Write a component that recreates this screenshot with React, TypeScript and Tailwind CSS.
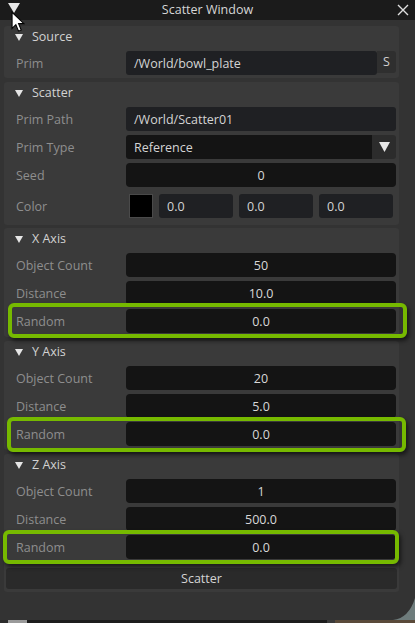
import React from "react";

const font = { fontFamily: '"Open Sans", "Liberation Sans", sans-serif' };

function Tri({ className = "" }: { className?: string }) {
  return (
    <svg width="8" height="7" viewBox="0 0 8 7" className={className}>
      <polygon points="0,0 8,0 4,7" fill="#e6e6e6" />
    </svg>
  );
}

function Header({ title }: { title: string }) {
  return (
    <div className="h-[22px] flex items-center pl-[11px] gap-[9px] pt-[1px]">
      <Tri />
      <span className="text-[#d2d2d2]">{title}</span>
    </div>
  );
}

function Row({ label, children, className = "" }: { label: string; children: React.ReactNode; className?: string }) {
  return (
    <div className={"flex items-center h-[24px] " + className}>
      <div className="w-[122px] pl-[12px] pt-[2px] text-[#8e8e8e] shrink-0">{label}</div>
      <div className="flex-1 h-full flex items-center">{children}</div>
    </div>
  );
}

function NumField({ value }: { value: string }) {
  return (
    <div className="w-[270px] h-full bg-[#141414] rounded-[4px] flex items-center justify-center pt-[2px] text-[#d8d8d8]">
      {value}
    </div>
  );
}

function Frame({ children, className = "" }: { children: React.ReactNode; className?: string }) {
  return <div className={"bg-[#3a3a3a] rounded-[3px] " + className}>{children}</div>;
}

function Axis({ name, count, dist, className = "" }: { name: string; count: string; dist: string; className?: string }) {
  return (
    <Frame className={"pb-[4px] " + className}>
      <Header title={name} />
      <div className="flex flex-col gap-[4px] mt-[3px]">
        <Row label="Object Count"><NumField value={count} /></Row>
        <Row label="Distance"><NumField value={dist} /></Row>
        <Row label="Random"><NumField value="0.0" /></Row>
      </div>
    </Frame>
  );
}

function GreenBox({ className }: { className: string }) {
  return (
    <div
      className={
        "absolute border-[4px] border-[#76b900] rounded-[6px] shadow-[2px_3px_4px_rgba(0,0,0,0.55)] pointer-events-none " +
        className
      }
    />
  );
}

export default function App() {
  return (
    <div className="relative w-[415px] h-[623px] bg-[#1c1c1c] overflow-hidden text-[12.5px]" style={font}>
      <div className="h-[620px] bg-[#333333] flex flex-col">
        {/* title bar */}
        <div className="h-[20px] bg-[#1b1b1b] relative flex items-center justify-center shrink-0">
          <span className="text-[#d6d6d6]">Scatter Window</span>
          <svg className="absolute left-[8px] top-[3px]" width="12" height="10" viewBox="0 0 12 10">
            <polygon points="0,0 12,0 6,10" fill="#e8e8e8" />
          </svg>
          <svg className="absolute right-[6px] top-[4px]" width="12" height="12" viewBox="0 0 12 12">
            <path d="M1 1 L11 11 M11 1 L1 11" stroke="#e0e0e0" strokeWidth="1.4" />
          </svg>
        </div>

        <div className="pl-[4px] pr-[16px] pt-[6px] flex flex-col">
          {/* Source */}
          <Frame className="pb-[3px]">
            <Header title="Source" />
            <Row label="Prim" className="mt-[3px]">
              <div className="w-[251px] h-full bg-[#1f2023] rounded-[3px] flex items-center pl-[8px] pt-[2px] text-[#d4d4d4]">
                /World/bowl_plate
              </div>
              <div className="w-[19px] h-[22px] self-start bg-[#2f2f2f] rounded-r-[3px] flex items-center justify-center pt-[1px] text-[#cfcfcf]">
                S
              </div>
            </Row>
          </Frame>

          {/* Scatter */}
          <Frame className="mt-[4px] pb-[7px]">
            <Header title="Scatter" />
            <div className="flex flex-col mt-[3px]">
              <Row label="Prim Path">
                <div className="w-[270px] h-full bg-[#1f2023] rounded-[3px] flex items-center pl-[8px] pt-[2px] text-[#d4d4d4]">
                  /World/Scatter01
                </div>
              </Row>
              <Row label="Prim Type" className="mt-[4px]">
                <div className="w-[270px] h-full flex rounded-[3px] overflow-hidden">
                  <div className="flex-1 bg-[#141414] flex items-center pl-[8px] pt-[2px] text-[#d4d4d4]">Reference</div>
                  <div className="w-[24px] bg-[#2c2c2c] flex items-center justify-center">
                    <svg width="11" height="10" viewBox="0 0 11 10">
                      <polygon points="0,0 11,0 5.5,10" fill="#e6e6e6" />
                    </svg>
                  </div>
                </div>
              </Row>
              <Row label="Seed" className="mt-[4px]">
                <NumField value="0" />
              </Row>
              <Row label="Color" className="mt-[7px]">
                <div className="flex items-center h-full gap-[6px] pl-[3px]">
                  <div className="w-[24px] h-[24px] bg-black border border-[#4a4a4a]" />
                  {["0.0", "0.0", "0.0"].map((v, i) => (
                    <div
                      key={i}
                      className="w-[74px] h-full bg-[#1f2023] rounded-[3px] flex items-center pl-[8px] pt-[2px] text-[#d4d4d4]"
                    >
                      {v}
                    </div>
                  ))}
                </div>
              </Row>
            </div>
          </Frame>

          <Axis name="X Axis" count="50" dist="10.0" className="mt-[3px]" />
          <Axis name="Y Axis" count="20" dist="5.0" className="mt-[4px]" />
          <Frame className="mt-[4px] pb-[3px]">
            <Header title="Z Axis" />
            <div className="flex flex-col gap-[4px] mt-[3px]">
              <Row label="Object Count"><NumField value="1" /></Row>
              <Row label="Distance"><NumField value="500.0" /></Row>
              <Row label="Random"><NumField value="0.0" /></Row>
            </div>
            <div className="mx-[2px] mt-[9px] h-[21px] bg-[#2a2a2a] rounded-[3px] flex items-center justify-center pt-[1px] text-[#d4d4d4]">
              Scatter
            </div>
          </Frame>
        </div>
      </div>

      {/* bottom strip of what lies beneath */}
      <div className="absolute left-0 top-[620px] w-full h-[3px] flex">
        <div className="w-[8px] bg-[#2a2a2a]" />
        <div className="w-[19px] bg-[#9a9a9a]" />
        <div className="w-[300px] bg-[#1c1c1c]" />
        <div className="w-[8px] bg-[#3a3a3a]" />
        <div className="w-[80px] bg-[#5a4a3a]" />
      </div>

      {/* resize grip */}
      <svg className="absolute right-0 top-[598px]" width="22" height="22" viewBox="0 0 22 22">
        <path d="M22 0 L22 22 L0 22 Q16 20 22 0 Z" fill="#6e7c7c" />
      </svg>

      {/* highlight boxes */}
      <GreenBox className="left-[8px] top-[303px] w-[399px] h-[35px]" />
      <GreenBox className="left-[7px] top-[417px] w-[399px] h-[35px]" />
      <GreenBox className="left-[3px] top-[530px] w-[396px] h-[34px]" />

      {/* mouse cursor */}
      <svg className="absolute left-[11px] top-[11px]" width="14" height="22" viewBox="0 0 13 20">
        <path d="M1 1 L1 16 L4.5 12.5 L7 18.5 L9.5 17.5 L7 11.5 L12 11.5 Z" fill="#ffffff" stroke="#000000" strokeWidth="1" />
      </svg>
    </div>
  );
}
